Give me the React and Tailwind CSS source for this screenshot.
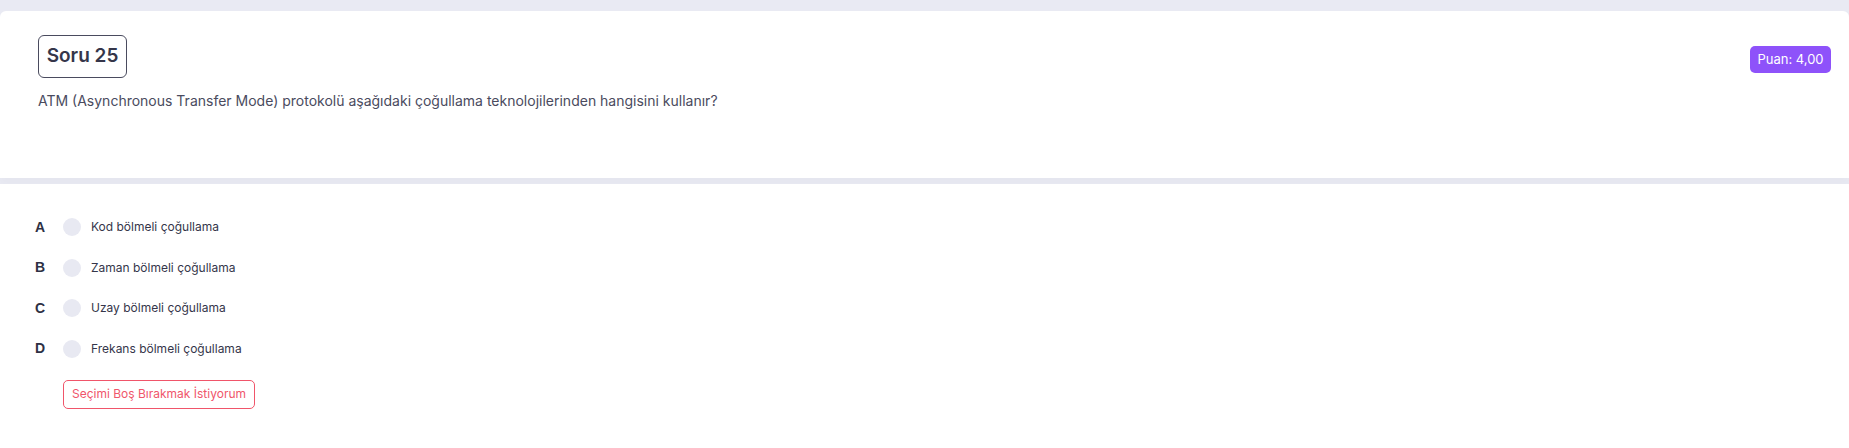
const options = [
  { key: "A", label: "Kod bölmeli çoğullama" },
  { key: "B", label: "Zaman bölmeli çoğullama" },
  { key: "C", label: "Uzay bölmeli çoğullama" },
  { key: "D", label: "Frekans bölmeli çoğullama" },
];

export default function App() {
  return (
    <div
      className="min-h-[448px] bg-[#e9eaf3] pt-[11px] flex flex-col gap-[6px]"
      style={{ fontFamily: "Inter, 'Noto Sans', sans-serif" }}
    >
      {/* question card */}
      <div className="h-[167px] bg-white rounded-tl-[6px] rounded-tr-[6px] shadow-[0_6px_8px_rgba(0,0,0,0.02)] pt-[24px] pl-[38px] pr-[18px]">
        <div className="flex items-start justify-between">
          <div className="h-[43px] w-[89px] flex items-center justify-center border border-[#4a4b5e] rounded-[6px] text-[19px] font-semibold text-[#35364a]">
            Soru 25
          </div>
          <div className="mt-[11px] h-[27px] w-[81px] flex items-center justify-center rounded-[5px] bg-[#8e52fa] text-white text-[13px]">
            Puan: 4,00
          </div>
        </div>
        <p className="mt-[13px] text-[14px] leading-[20px] text-[#4a4b5e]">
          ATM (Asynchronous Transfer Mode) protokolü aşağıdaki çoğullama teknolojilerinden hangisini kullanır?
        </p>
      </div>

      {/* answers card */}
      <div className="flex-1 bg-white pt-[31px] pl-[35px] pb-[30px]">
        <div className="flex flex-col gap-[16.5px]">
          {options.map((o) => (
            <div key={o.key} className="flex items-center h-[24px]">
              <span
                className="w-[28px] text-[14px] font-bold text-[#2e3044]"
                style={{ fontFamily: "'Liberation Sans', Arial, sans-serif" }}
              >
                {o.key}
              </span>
              <span className="w-[18px] h-[18px] rounded-full bg-[#e8e9f2]" />
              <span className="ml-[10px] text-[12px] text-[#35364a]">{o.label}</span>
            </div>
          ))}
        </div>
        <button className="mt-[19px] ml-[28px] h-[29px] w-[192px] rounded-[5px] border border-[#f0556a] text-[12px] text-[#f0566b]">
          Seçimi Boş Bırakmak İstiyorum
        </button>
      </div>
    </div>
  );
}
